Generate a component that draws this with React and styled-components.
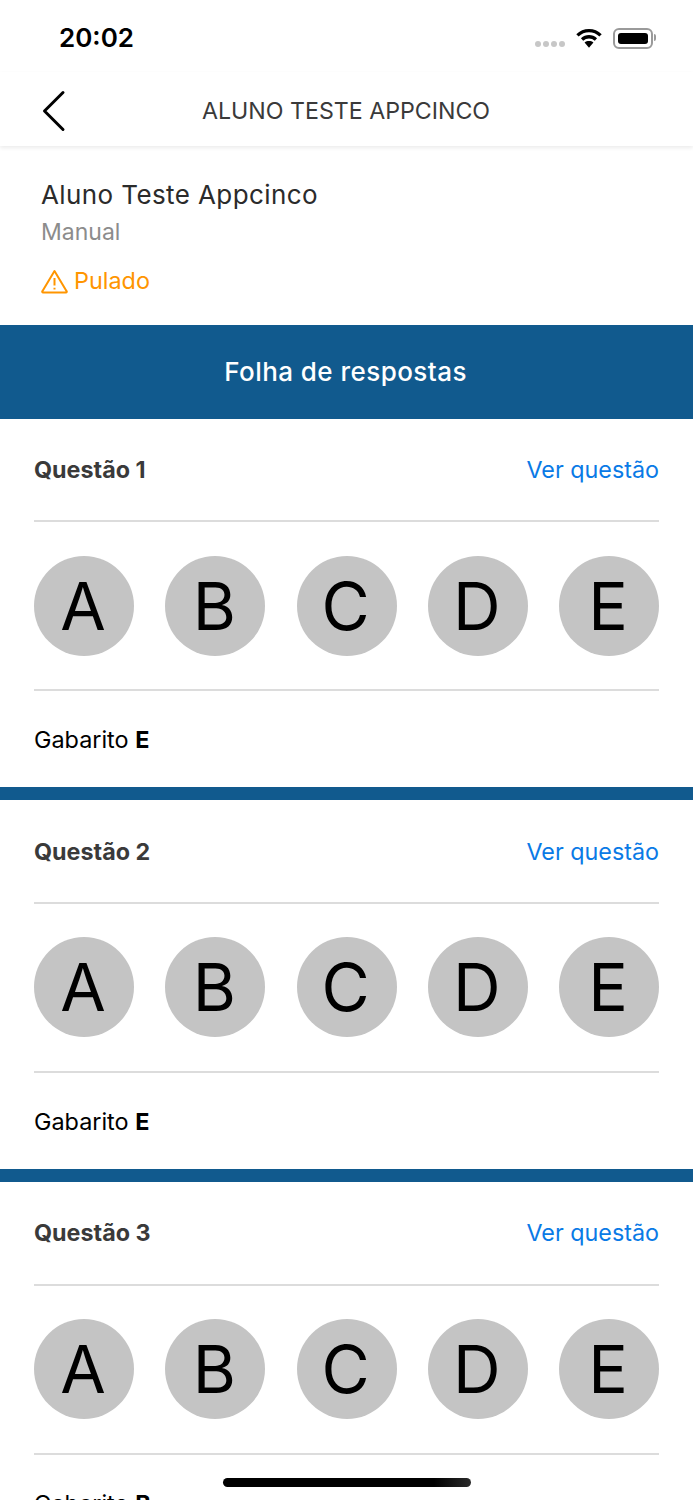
import styled, { createGlobalStyle } from "styled-components";

const questions = [
  { number: 1, answer: "E" },
  { number: 2, answer: "E" },
  { number: 3, answer: "B" },
];
const options = ["A", "B", "C", "D", "E"];

export default function App() {
  return (
    <Page>
      <GlobalStyle />
      <StatusBar>
        <Clock>20:02</Clock>
        <StatusIcons>
          <Signal>
            {[0, 1, 2, 3].map((i) => (
              <span key={i} />
            ))}
          </Signal>
          <svg width="26" height="21" viewBox="0 0 27 21">
            <path d="M1.5 7.2C8.2 .6 18.8 .6 25.5 7.2" fill="none" stroke="#000" strokeWidth="3.4" />
            <path d="M6.3 11.6c4.2-3.9 10.2-3.9 14.4 0" fill="none" stroke="#000" strokeWidth="3.4" />
            <path d="M8.9 14.6c2.7-2 6.5-2 9.2 0l-4.6 5.4z" fill="#000" />
          </svg>
          <Battery>
            <span />
          </Battery>
        </StatusIcons>
      </StatusBar>
      <NavBar>
        <BackButton>
          <svg width="26" height="44" viewBox="0 0 26 44">
            <path d="M22 4.5 3.5 23 22 41.5" fill="none" stroke="#000" strokeWidth="3" strokeLinecap="round" strokeLinejoin="round" />
          </svg>
        </BackButton>
        <NavTitle>ALUNO TESTE APPCINCO</NavTitle>
      </NavBar>
      <Student>
        <StudentName>Aluno Teste Appcinco</StudentName>
        <StudentType>Manual</StudentType>
        <Status>
          <svg width="27" height="25" viewBox="0 0 27 25">
            <path d="M13.5 2 25.6 22.2a.8.8 0 0 1-.7 1.3H2.1a.8.8 0 0 1-.7-1.3z" fill="none" stroke="#ff9500" strokeWidth="2" strokeLinejoin="round" />
            <path d="M13.5 9v7.5M13.5 18.8v1.8" fill="none" stroke="#ff9500" strokeWidth="2" />
          </svg>
          Pulado
        </Status>
      </Student>
      <Banner>Folha de respostas</Banner>
      {questions.map((q) => (
        <Question key={q.number}>
          <QuestionHead>
            <QuestionTitle>Questão {q.number}</QuestionTitle>
            <QuestionLink>Ver questão</QuestionLink>
          </QuestionHead>
          <OptionRow>
            {options.map((o) => (
              <Option key={o}>{o}</Option>
            ))}
          </OptionRow>
          <AnswerKey>
            Gabarito <b>{q.answer}</b>
          </AnswerKey>
        </Question>
      ))}
      <HomeBar />
    </Page>
  );
}

const GlobalStyle = createGlobalStyle`
  html, body {
    margin: 0;
    padding: 0;
    background: #fff;
  }
  * {
    box-sizing: border-box;
  }
`;

const Page = styled.div`
  position: relative;
  width: 693px;
  height: 1500px;
  overflow: hidden;
  background: #fff;
  font-family: Inter, "Liberation Sans", sans-serif;
`;

const StatusBar = styled.div`
  height: 72px;
  padding: 0 40px 0 59px;
  display: flex;
  justify-content: space-between;
  align-items: center;
`;

const Clock = styled.span`
  font-size: 26px;
  font-weight: 600;
  color: #000;
  margin-top: 3px;
`;

const StatusIcons = styled.div`
  display: flex;
  align-items: center;
  gap: 11px;
  margin-top: 4px;
`;

const Signal = styled.div`
  display: flex;
  gap: 2px;
  margin-top: 11px;
  > span {
    width: 6px;
    height: 6px;
    border-radius: 50%;
    background: #c7c7c7;
  }
`;

const Battery = styled.div`
  position: relative;
  width: 40px;
  height: 21px;
  padding: 3px;
  border: 2px solid #9a9a9a;
  border-radius: 6px;
  > span {
    display: block;
    height: 100%;
    background: #000;
    border-radius: 3px;
  }
  &::after {
    content: "";
    position: absolute;
    right: -5px;
    top: 4px;
    width: 2px;
    height: 7px;
    background: #9a9a9a;
    border-radius: 0 2px 2px 0;
  }
`;

const NavBar = styled.div`
  position: relative;
  height: 74px;
  padding-top: 3px;
  display: flex;
  align-items: center;
  justify-content: center;
  box-shadow: 0 2px 4px rgba(0, 0, 0, 0.08);
`;

const BackButton = styled.div`
  position: absolute;
  left: 41px;
  top: 16px;
  line-height: 0;
`;

const NavTitle = styled.span`
  font-size: 23.2px;
  color: #3a3a3a;
  margin-left: -1px;
`;

const Student = styled.div`
  height: 179px;
  padding: 32px 41px 0;
`;

const StudentName = styled.div`
  font-size: 26px;
  line-height: 34px;
  letter-spacing: 0.4px;
  color: #2b2b2b;
`;

const StudentType = styled.div`
  margin-top: 5px;
  font-size: 23px;
  line-height: 30px;
  color: #8c8c8c;
`;

const Status = styled.div`
  margin-top: 19px;
  display: flex;
  align-items: center;
  gap: 6px;
  font-size: 23.4px;
  line-height: 30px;
  color: #ff9500;
`;

const Banner = styled.div`
  height: 93.5px;
  padding: 0 2px 0 0;
  background: #115a8e;
  color: #fff;
  font-size: 26px;
  font-weight: 500;
  letter-spacing: 0.45px;
  display: flex;
  align-items: center;
  justify-content: center;
`;

const Question = styled.section`
  height: 381.75px;
  padding: 0 34px;
  border-bottom: 13px solid #115a8e;
`;

const QuestionHead = styled.div`
  height: 103.5px;
  display: flex;
  justify-content: space-between;
  align-items: center;
  border-bottom: 2px solid #dcdcdc;
`;

const QuestionTitle = styled.span`
  font-size: 23.3px;
  font-weight: 700;
  color: #3a3a3a;
`;

const QuestionLink = styled.span`
  font-size: 23.3px;
  color: #0a7ae6;
  margin-left: -1px;
`;

const OptionRow = styled.div`
  height: 169px;
  display: flex;
  justify-content: space-between;
  align-items: center;
  border-bottom: 2px solid #dcdcdc;
`;

const Option = styled.div`
  width: 100px;
  height: 100px;
  padding-right: 2px;
  border-radius: 50%;
  background: #c4c4c4;
  color: #000;
  font-size: 66px;
  display: flex;
  align-items: center;
  justify-content: center;
`;

const AnswerKey = styled.div`
  padding-top: 34px;
  font-size: 23.4px;
  line-height: 30px;
  color: #000;
`;

const HomeBar = styled.div`
  position: absolute;
  left: 223px;
  bottom: 13px;
  width: 248px;
  height: 9px;
  border-radius: 5px;
  background: linear-gradient(90deg, #000 85%, #2a2a2a);
`;
